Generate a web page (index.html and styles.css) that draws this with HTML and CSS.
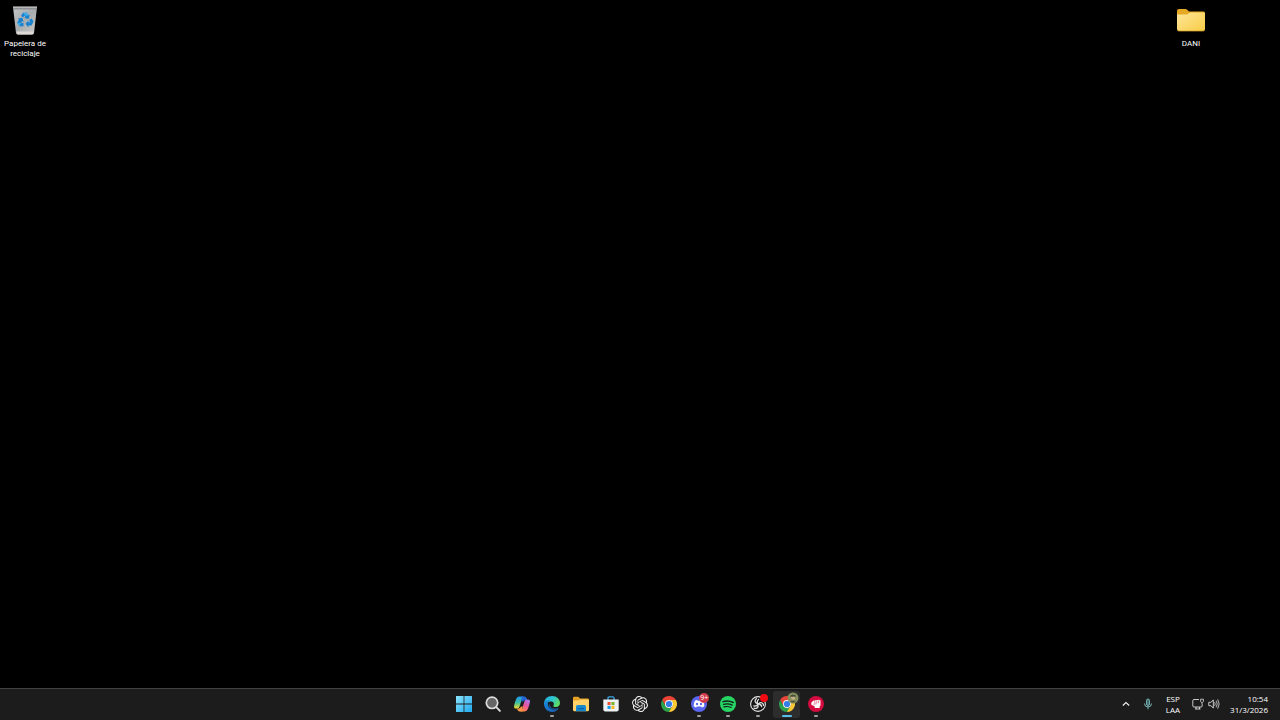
FILE: index.html
```html
<!DOCTYPE html>
<html lang="es">
<head>
<meta charset="utf-8">
<title>Escritorio</title>
<link rel="stylesheet" href="styles.css">
</head>
<body>
<main class="desktop">
  <button class="shortcut">
    <svg class="shortcut-icon" viewBox="0 0 30 32" aria-hidden="true">
      <defs><linearGradient id="bin" x1="0" y1="0" x2="1" y2="1"><stop offset="0" stop-color="#c3c5c7"/><stop offset=".5" stop-color="#a9acaf"/><stop offset="1" stop-color="#d0cdca"/></linearGradient></defs>
      <path d="M3 3h24l-3 26q-.2 1.600-2 1.600H8q-1.800 0-2-1.600z" fill="url(#bin)"/>
      <path d="M3 3h24l-.4 2.600H3.400z" fill="#8d9092"/>
      <path d="M3 3h24" stroke="#dedede" stroke-width="1"/>
      <path d="M6.500 27.500h17l-.4 2q-.3 1-1.500 1H8.400q-1.200 0-1.500-1z" fill="#dcd9d6"/>
      <g fill="#1683d1"><path d="M11 12l2-3.200h4l1.600 2.600 1.400-.8-1.500 4.400-4.400-1 1.400-.8-1-1.600-1.300 2z"/><path d="M19 16l2.800-1.600 1.700 3.200-2 4h-3v1.800l-3-3.700 3-3.300v1.800h1.800z"/><path d="M7.800 14.500l4.500-.8 1.300 4.300-1.600-.8-.9 1.700h2.400v3.300H9.400l-2.200-3.500 1.800-3.300z"/></g>
      <path d="M13 8.800h4l1.600 2.600-3 .4zM9.400 22.200l-2.200-3.500h3.900z" fill="#45adeb"/>
    </svg>
    <span class="shortcut-label">Papelera de reciclaje</span>
  </button>
  <button class="shortcut folder">
    <svg class="shortcut-icon" viewBox="0 0 30 32" aria-hidden="true">
      <defs><linearGradient id="fold" x1="0" y1="0" x2="1" y2="1"><stop offset="0" stop-color="#ffe69a"/><stop offset="1" stop-color="#f7cc45"/></linearGradient></defs>
      <path d="M1 7q0-2 2-2h6.500q1 0 1.700.8L13 7.500h14.500q1.500 0 1.500 1.500v10H1z" fill="#e5a923"/>
      <path d="M1 10.500h9.500q1 0 1.800-.8l.9-.8q.6-.5 1.400-.5h13q1.400 0 1.400 1.400V25q0 2-2 2H3q-2 0-2-2z" fill="url(#fold)"/>
      <path d="M1.500 26.200q.6.800 1.500.8h24q1 0 1.600-.8" stroke="#dba425" stroke-width=".7" fill="none"/>
    </svg>
    <span class="shortcut-label">DANI</span>
  </button>
</main>

<footer class="taskbar">
  <nav class="apps" aria-label="Barra de tareas">
    <button class="app" aria-label="Inicio">
      <svg viewBox="0 0 18 18"><defs><linearGradient id="win" x1="0" y1="0" x2="1" y2="1"><stop offset="0" stop-color="#8be4fd"/><stop offset="1" stop-color="#20a8ee"/></linearGradient></defs><path d="M1 1h7.600v7.600H1zM9.400 1H17v7.600H9.400zM1 9.400h7.600V17H1zM9.400 9.400H17V17H9.400z" fill="url(#win)"/></svg>
    </button>
    <button class="app" aria-label="Buscar">
      <svg viewBox="0 0 18 18"><circle cx="8" cy="7.800" r="5.700" fill="#666" stroke="#dedede" stroke-width="1.700"/><path d="M12.300 12.200l3.600 3.700" stroke="#dedede" stroke-width="1.900" stroke-linecap="round"/></svg>
    </button>
    <button class="app" aria-label="Copilot">
      <svg viewBox="0 0 18 18"><defs><linearGradient id="ca" x1="0" y1="0" x2="0" y2="1"><stop offset="0" stop-color="#2095ee"/><stop offset=".5" stop-color="#3bc0a0"/><stop offset="1" stop-color="#f0dc2c"/></linearGradient><linearGradient id="cb" x1=".8" y1="0" x2=".3" y2="1"><stop offset="0" stop-color="#a678f4"/><stop offset=".5" stop-color="#ea559f"/><stop offset="1" stop-color="#ff8b40"/></linearGradient></defs>
      <path d="M6.200 1.600h4.600q-1.400.6-1.900 2.300L6.700 11.200q-.7 2.300-2.600 2.300H3q-2.500 0-1.900-2.800.7-3.700 2.200-7Q4.200 1.600 6.200 1.600z" fill="url(#ca)"/>
      <path d="M6.200 1.600h5.200q1.700 0 2.200 1.700l.5 1.600h-1.900q-1.500 0-2.100 1.500H8.200l.7-2.500q.4-1.400-.6-2.300z" fill="#2364d6"/>
      <path d="M11.800 16.400H7.200q1.400-.6 1.900-2.300l2.200-7.300q.7-2.300 2.600-2.300H15q2.500 0 1.900 2.800-.7 3.700-2.200 7-.9 2.100-2.900 2.100z" fill="url(#cb)"/>
      <path d="M11.800 16.400H6.600q-1.700 0-2.200-1.700l-.4-1.200h1.800q1.500 0 2.100-1.900h1.900l-.7 2.500q-.4 1.400.6 2.300z" fill="#fb9444"/></svg>
    </button>
    <button class="app running" aria-label="Microsoft Edge">
      <svg viewBox="0 0 18 18"><defs><linearGradient id="ea" x1="0" y1="0" x2="1" y2=".5"><stop offset="0" stop-color="#28a7e5"/><stop offset=".55" stop-color="#2ec7cf"/><stop offset="1" stop-color="#5bdb62"/></linearGradient><linearGradient id="eb" x1="0" y1="0" x2="0" y2="1"><stop offset="0" stop-color="#1793dc"/><stop offset="1" stop-color="#1763bb"/></linearGradient></defs>
      <path d="M1 8.500Q1.500 1 9 1c5 0 8 3.500 8 7 0 2.600-2 4-4 4-2.200 0-3.200-.8-2.600-1.600 1.300-1.800.1-4-2.700-4Q4 6.400 1 10z" fill="url(#ea)"/>
      <path d="M1 9c0-3 3-4.500 6-3.800-2.200 1-2.500 3.200-1.900 5.300.8 2.900 3.800 4.500 7 4 1.200-.2 2.400-.8 3.400-1.300C14.500 15.500 12 17 9 17c-4.500 0-8-3.600-8-8z" fill="url(#eb)"/><path d="M6.900 8.300c-.7 3.400 2.500 6.300 7.600 4.600.9-.4 1.400-.2 1 .4-1.300 1.600-2.900 2.100-4.700 1.900-4-.4-6.200-4-3.900-6.900z" fill="#17508a"/></svg>
    </button>
    <button class="app" aria-label="Explorador de archivos">
      <svg viewBox="0 0 18 18"><path d="M1 3q0-1.300 1.300-1.300h4L8 3.400h7.700Q17 3.400 17 4.700V9H1z" fill="#e4a126"/><path d="M1 5.500h5.500L8 4.400h7.700Q17 4.400 17 5.700v9.100q0 1.500-1.500 1.500h-13Q1 16.300 1 14.800z" fill="#ffd368"/><path d="M4 11.700q0-1.700 1.700-1.700h6.600q1.700 0 1.700 1.700v4.600H4z" fill="#1689cf"/><path d="M6 13h6v1.200H6z" fill="#0962a4"/></svg>
    </button>
    <button class="app" aria-label="Microsoft Store">
      <svg viewBox="0 0 18 18"><path d="M6 5V3q0-1.200 1.200-1.200h3.600Q12 1.800 12 3v2" fill="none" stroke="#38a7e7" stroke-width="1.300"/><path d="M1.300 4.600h15.400v10q0 2-2 2H3.300q-2 0-2-2z" fill="#eef1f4"/><path d="M5.500 7h3.100v3.100H5.500z" fill="#eb5533"/><path d="M9.400 7h3.100v3.100H9.400z" fill="#79b52c"/><path d="M5.500 10.900h3.100V14H5.500z" fill="#1b9ce8"/><path d="M9.400 10.900h3.100V14H9.400z" fill="#f6b923"/></svg>
    </button>
    <button class="app" aria-label="ChatGPT">
      <svg viewBox="-1.500 -1.500 27 27"><path fill="#eee" d="M22.2819 9.8211a5.9847 5.9847 0 0 0-.5157-4.9108 6.0462 6.0462 0 0 0-6.5098-2.9A6.0651 6.0651 0 0 0 4.9807 4.1818a5.9847 5.9847 0 0 0-3.9977 2.9 6.0462 6.0462 0 0 0 .7427 7.0966 5.98 5.98 0 0 0 .511 4.9107 6.051 6.051 0 0 0 6.5146 2.9001A5.9847 5.9847 0 0 0 13.2599 24a6.0557 6.0557 0 0 0 5.7718-4.2058 5.9894 5.9894 0 0 0 3.9977-2.9001 6.0557 6.0557 0 0 0-.7475-7.0729zm-9.022 12.6081a4.4755 4.4755 0 0 1-2.8764-1.0408l.1419-.0804 4.7783-2.7582a.7948.7948 0 0 0 .3927-.6813v-6.7369l2.02 1.1686a.071.071 0 0 1 .038.052v5.5826a4.504 4.504 0 0 1-4.4945 4.4944zm-9.6607-4.1254a4.4708 4.4708 0 0 1-.5346-3.0137l.142.0852 4.783 2.7582a.7712.7712 0 0 0 .7806 0l5.8428-3.3685v2.3324a.0804.0804 0 0 1-.0332.0615L9.74 19.9502a4.4992 4.4992 0 0 1-6.1408-1.6464zM2.3408 7.8956a4.485 4.485 0 0 1 2.3655-1.9728V11.6a.7664.7664 0 0 0 .3879.6765l5.8144 3.3543-2.0201 1.1685a.0757.0757 0 0 1-.071 0l-4.8303-2.7865A4.504 4.504 0 0 1 2.3408 7.872zm16.5963 3.8558L13.1038 8.364 15.1192 7.2a.0757.0757 0 0 1 .071 0l4.8303 2.7913a4.4944 4.4944 0 0 1-.6765 8.1042v-5.6772a.79.79 0 0 0-.407-.667zm2.0107-3.0231l-.142-.0852-4.7735-2.7818a.7759.7759 0 0 0-.7854 0L9.409 9.2297V6.8974a.0662.0662 0 0 1 .0284-.0615l4.8303-2.7866a4.4992 4.4992 0 0 1 6.6802 4.66zM8.3065 12.863l-2.02-1.1638a.0804.0804 0 0 1-.038-.0567V6.0742a4.4992 4.4992 0 0 1 7.3757-3.4537l-.142.0805L8.704 5.459a.7948.7948 0 0 0-.3927.6813zm1.0976-2.3654l2.602-1.4998 2.6069 1.4998v2.9994l-2.5974 1.4997-2.6067-1.4997Z"/></svg>
    </button>
    <button class="app" aria-label="Google Chrome">
      <svg viewBox="0 0 18 18"><g id="chrome"><path d="M2.100 5A8 8 0 0 1 15.900 5H9L5.500 11z" fill="#e94435"/><path d="M2.100 5l3.430 6A4 4 0 0 0 9 13l-.1 4A8 8 0 0 1 2.100 5z" fill="#2ba24c"/><path d="M9 13l-.1 4 3.560-4z" fill="#2ba24c"/><path d="M15.900 5A8 8 0 0 1 8.900 17l3.560-6A4 4 0 0 0 9 5z" fill="#fcc934"/><circle cx="9" cy="9" r="4" fill="#f5f5f5"/><circle cx="9" cy="9" r="3.100" fill="#347de8"/></g></svg>
    </button>
    <button class="app running" aria-label="Discord, más de 9 avisos">
      <svg viewBox="0 0 18 18"><circle cx="9" cy="9" r="8" fill="#5865ee"/><path d="M5.200 5.600l2-.7.5.9h2.600l.5-.9 2 .7c1 1.600 1.500 3.300 1.500 5.600-.7.700-1.500 1.100-2.400 1.300l-.7-1.100H6.800l-.7 1.100c-.9-.2-1.700-.6-2.400-1.300 0-2.300.5-4 1.500-5.600z" fill="#fff"/><ellipse cx="7" cy="9" rx="1.100" ry="1.200" fill="#5865ee"/><ellipse cx="11" cy="9" rx="1.100" ry="1.200" fill="#5865ee"/></svg>
      <span class="count">9+</span>
    </button>
    <button class="app running" aria-label="Spotify">
      <svg viewBox="0 0 18 18"><circle cx="9" cy="9" r="8" fill="#27d565"/><g fill="none" stroke="#102219" stroke-linecap="round"><path d="M4 6.600q5.400-1.500 10.200.9" stroke-width="1.500"/><path d="M4.500 9.300q4.700-1.300 8.700.8" stroke-width="1.300"/><path d="M4.900 11.900q4-1 7.300.7" stroke-width="1.100"/></g></svg>
    </button>
    <button class="app running" aria-label="OBS Studio, grabando">
      <svg viewBox="0 0 18 18"><circle cx="9" cy="9" r="7.400" fill="#161516" stroke="#e5e5e5" stroke-width="1.100"/><g fill="none" stroke="#dedede" stroke-width="1.300" stroke-linecap="round"><path id="blade" d="M7.400 3.500C5.200 5.300 5.800 8 8.400 8.500c2.700.4 4 1.500 4.300 3.200"/><use href="#blade" transform="rotate(120 9 9)"/><use href="#blade" transform="rotate(240 9 9)"/></g></svg>
      <span class="recording"></span>
    </button>
    <button class="app running active" aria-label="Google Chrome, ventana activa">
      <svg viewBox="0 0 18 18"><use href="#chrome"/></svg>
      <svg class="avatar" viewBox="0 0 12 12"><circle cx="6" cy="6" r="5.500" fill="#87915f"/><path d="M2.800 4q3.200-3 6.400 0L8 5H4z" fill="#46503a"/><path d="M4 4.700h4v2L6.500 8.200 4.500 7z" fill="#c3b087"/><path d="M3 9.600Q6 7.600 9 9.600 6 12 3 9.600z" fill="#565f43"/></svg>
    </button>
    <button class="app running" aria-label="Riot Client">
      <svg viewBox="0 0 18 18"><circle cx="9" cy="9" r="8" fill="#d30b3e"/><path d="M4.300 7.500l2.300-1.900 1.500-.2 1.300-.5 1.300.2 1.200-.4 1.600.8v5l-.8.700v1.900l-4.900-.2-.3-1.600-3.200-1.600z" fill="#fff"/><path d="M7.700 5.800l.2 2.500M9.700 5.400l.1 2.800M11.600 5.400v2.800M6.300 9.200l3.500-.5" stroke="#d30b3e" stroke-width=".5" fill="none"/></svg>
    </button>
  </nav>

  <div class="tray">
    <button class="tray-item" aria-label="Mostrar iconos ocultos"><svg viewBox="0 0 12 12"><path d="M2.800 7.500L6 4.500l3.200 3" fill="none" stroke="#eee" stroke-width="1.200"/></svg></button>
    <button class="tray-item" aria-label="Micrófono"><svg viewBox="0 0 12 12"><rect x="4.500" y="1" width="3" height="6.500" rx="1.500" fill="#406a6b" stroke="#86c5c5" stroke-width=".8"/><path d="M2.500 5.500a3.500 3.500 0 0 0 7 0M6 9v2.300" fill="none" stroke="#86c5c5" stroke-width=".9"/></svg></button>
    <button class="tray-text language"><span>ESP</span><span>LAA</span></button>
    <button class="status" aria-label="Red y volumen">
      <svg viewBox="0 0 12 12"><path d="M7 1.500H2Q.8 1.500.8 2.700v5.200Q.8 9 2 9h7q1.200 0 1.200-1.100V6.200M4 9v2M7.500 9v2M3 11h5.500" fill="none" stroke="#ddd" stroke-width=".9"/><path d="M8.600 1.200h2.800v2.300l-.8.8H9.400l-.8-.8zM10 4.300v2" fill="none" stroke="#ddd" stroke-width=".8"/></svg>
      <svg viewBox="0 0 12 12"><path d="M.8 4.300h2L5.300 2v8L2.800 7.700h-2z" fill="none" stroke="#ddd" stroke-width=".9" stroke-linejoin="round"/><path d="M6.800 4.500q1 1.500 0 3M8.300 3q2.100 3 0 6M9.900 1.700q2.700 4.300 0 8.600" fill="none" stroke="#ddd" stroke-width=".8" stroke-linecap="round"/></svg>
    </button>
    <button class="tray-text clock"><span>10:54</span><span>31/3/2026</span></button>
  </div>
</footer>
</body>
</html>
```
FILE: styles.css
```css
* {
  box-sizing: border-box;
}

body {
  margin: 0;
  min-height: 100vh;
  display: flex;
  flex-direction: column;
  background: #000;
  color: #fff;
  font-family: "Open Sans", "Noto Sans", sans-serif;
  font-size: 8px;
}

button {
  margin: 0;
  padding: 0;
  border: 0;
  background: none;
  color: inherit;
  font: inherit;
}

svg {
  display: block;
}

.desktop {
  flex: 1;
  display: flex;
  justify-content: space-between;
  align-items: flex-start;
  padding: 4px 64px 0 0;
}

.shortcut {
  width: 50px;
  display: flex;
  flex-direction: column;
  align-items: center;
  gap: 3px;
}

.shortcut-icon {
  width: 30px;
  height: 32px;
}

.shortcut-label {
  font-family: Roboto, "Noto Sans", sans-serif;
  line-height: 10px;
  text-align: center;
}

.taskbar {
  height: 32px;
  display: grid;
  grid-template-columns: 1fr auto 1fr;
  align-items: center;
  background: #1c1c1c;
  border-top: 1px solid #424242;
}

.apps {
  grid-column: 2;
  width: 380px;
  display: flex;
  justify-content: space-between;
}

.app {
  position: relative;
  width: 27px;
  height: 27px;
  display: grid;
  justify-items: center;
  align-items: start;
  padding-top: 4px;
  border-radius: 3px;
}

.app > svg {
  width: 18px;
  height: 18px;
}

.running::after {
  content: "";
  position: absolute;
  bottom: 1px;
  left: 50%;
  width: 4px;
  height: 2px;
  margin-left: -2px;
  border-radius: 1px;
  background: #a0a0a0;
}

.active {
  background: #2d2d2d;
}

.active::after {
  width: 10px;
  margin-left: -5px;
  background: #58bfea;
}

.count {
  position: absolute;
  top: 2px;
  right: 3px;
  width: 10px;
  height: 10px;
  border-radius: 50%;
  background: #d13a4a;
  font-size: 7px;
  line-height: 10px;
  text-align: center;
}

.recording {
  position: absolute;
  top: 3px;
  right: 3px;
  width: 8px;
  height: 8px;
  border-radius: 50%;
  background: #f40b12;
}

.app > .avatar {
  position: absolute;
  top: 1px;
  right: 1px;
  width: 12px;
  height: 12px;
}

.tray {
  justify-self: end;
  display: flex;
  align-items: center;
  padding: 0 12px 1px 0;
}

.tray svg {
  width: 12px;
  height: 12px;
}

.tray-item {
  width: 22px;
  display: grid;
  place-items: center;
}

.tray-text {
  display: flex;
  flex-direction: column;
  line-height: 11px;
}

.language {
  align-items: center;
  padding: 0 8px 0 7px;
}

.status {
  display: flex;
  gap: 4px;
  padding: 0 10px 0 4px;
}

.clock {
  align-items: flex-end;
}
```
